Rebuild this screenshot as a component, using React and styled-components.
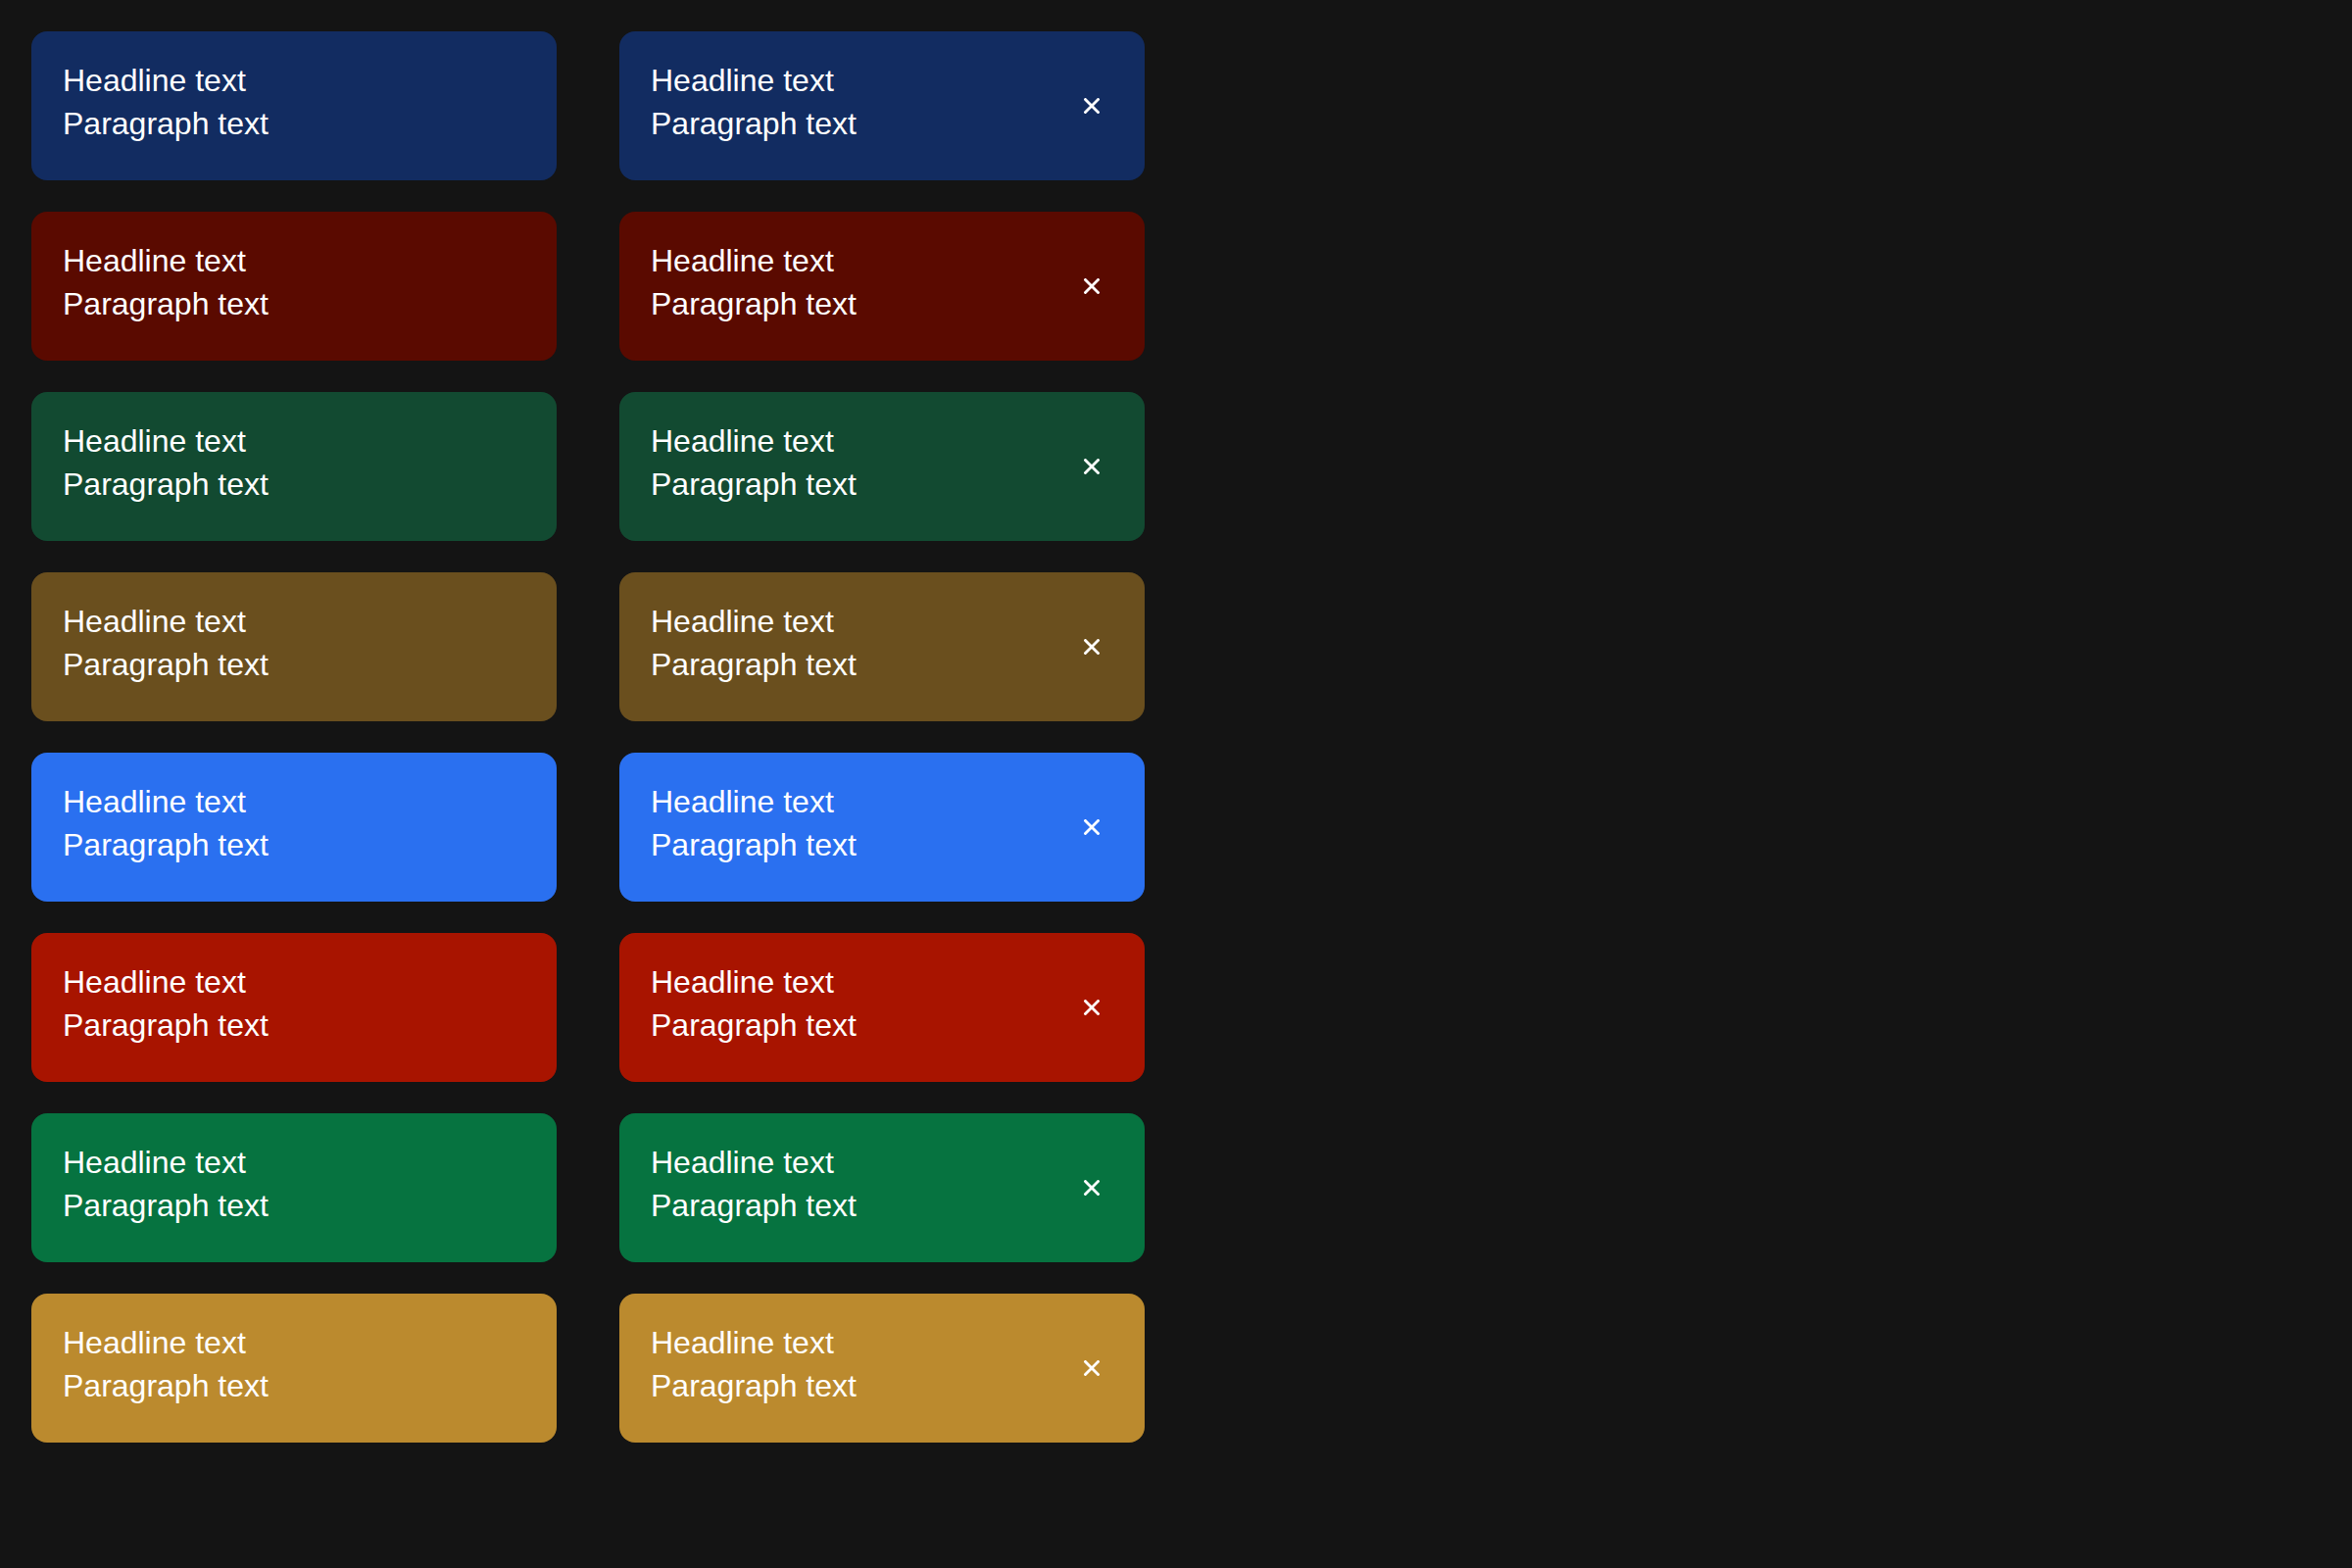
import React from "react";
import styled, { createGlobalStyle } from "styled-components";

const GlobalStyle = createGlobalStyle`
  html, body {
    margin: 0;
    padding: 0;
    background: #141414;
  }
  body {
    font-family: "Liberation Sans", Arimo, Helvetica, Arial, sans-serif;
    color: #ffffff;
  }
`;

const Page = styled.div`
  min-height: 1600px;
  box-sizing: border-box;
  padding: 32px;
  background: #141414;
  font-family: "Liberation Sans", Arimo, Helvetica, Arial, sans-serif;
`;

const Grid = styled.div`
  display: grid;
  grid-template-columns: 536px 536px;
  column-gap: 64px;
  row-gap: 32px;
`;

const Card = styled.div`
  box-sizing: border-box;
  display: flex;
  align-items: center;
  justify-content: space-between;
  height: 152px;
  padding: 0 32px;
  border-radius: 16px;
  background: ${(p) => p.$bg};
  color: #ffffff;
`;

const Content = styled.div`
  display: flex;
  flex-direction: column;
  font-family: "Liberation Sans", Arimo, Helvetica, Arial, sans-serif;
`;

const Headline = styled.div`
  font-size: 32px;
  line-height: 37px;
`;

const Paragraph = styled.div`
  font-size: 32px;
  line-height: 51px;
`;

const CloseButton = styled.button`
  display: flex;
  align-items: center;
  justify-content: center;
  width: 40px;
  height: 40px;
  margin-right: 2px;
  padding: 0;
  border: none;
  background: transparent;
  color: #ffffff;
  cursor: pointer;
`;

const colors = [
  "#122c61",
  "#5a0a00",
  "#124a31",
  "#6a4f1e",
  "#2a70f0",
  "#a81400",
  "#067340",
  "#bb8a2e",
];

const CloseIcon = () => (
  <svg width="16" height="16" viewBox="0 0 16 16" fill="none">
    <path
      d="M1.5 1.5 L14.5 14.5 M14.5 1.5 L1.5 14.5"
      stroke="currentColor"
      strokeWidth="2.8"
      strokeLinecap="square"
    />
  </svg>
);

export default function App() {
  return (
    <>
      <GlobalStyle />
      <Page>
        <Grid>
          {colors.map((c) => (
            <React.Fragment key={c}>
              <Card $bg={c}>
                <Content>
                  <Headline>Headline text</Headline>
                  <Paragraph>Paragraph text</Paragraph>
                </Content>
              </Card>
              <Card $bg={c}>
                <Content>
                  <Headline>Headline text</Headline>
                  <Paragraph>Paragraph text</Paragraph>
                </Content>
                <CloseButton aria-label="Close">
                  <CloseIcon />
                </CloseButton>
              </Card>
            </React.Fragment>
          ))}
        </Grid>
      </Page>
    </>
  );
}
